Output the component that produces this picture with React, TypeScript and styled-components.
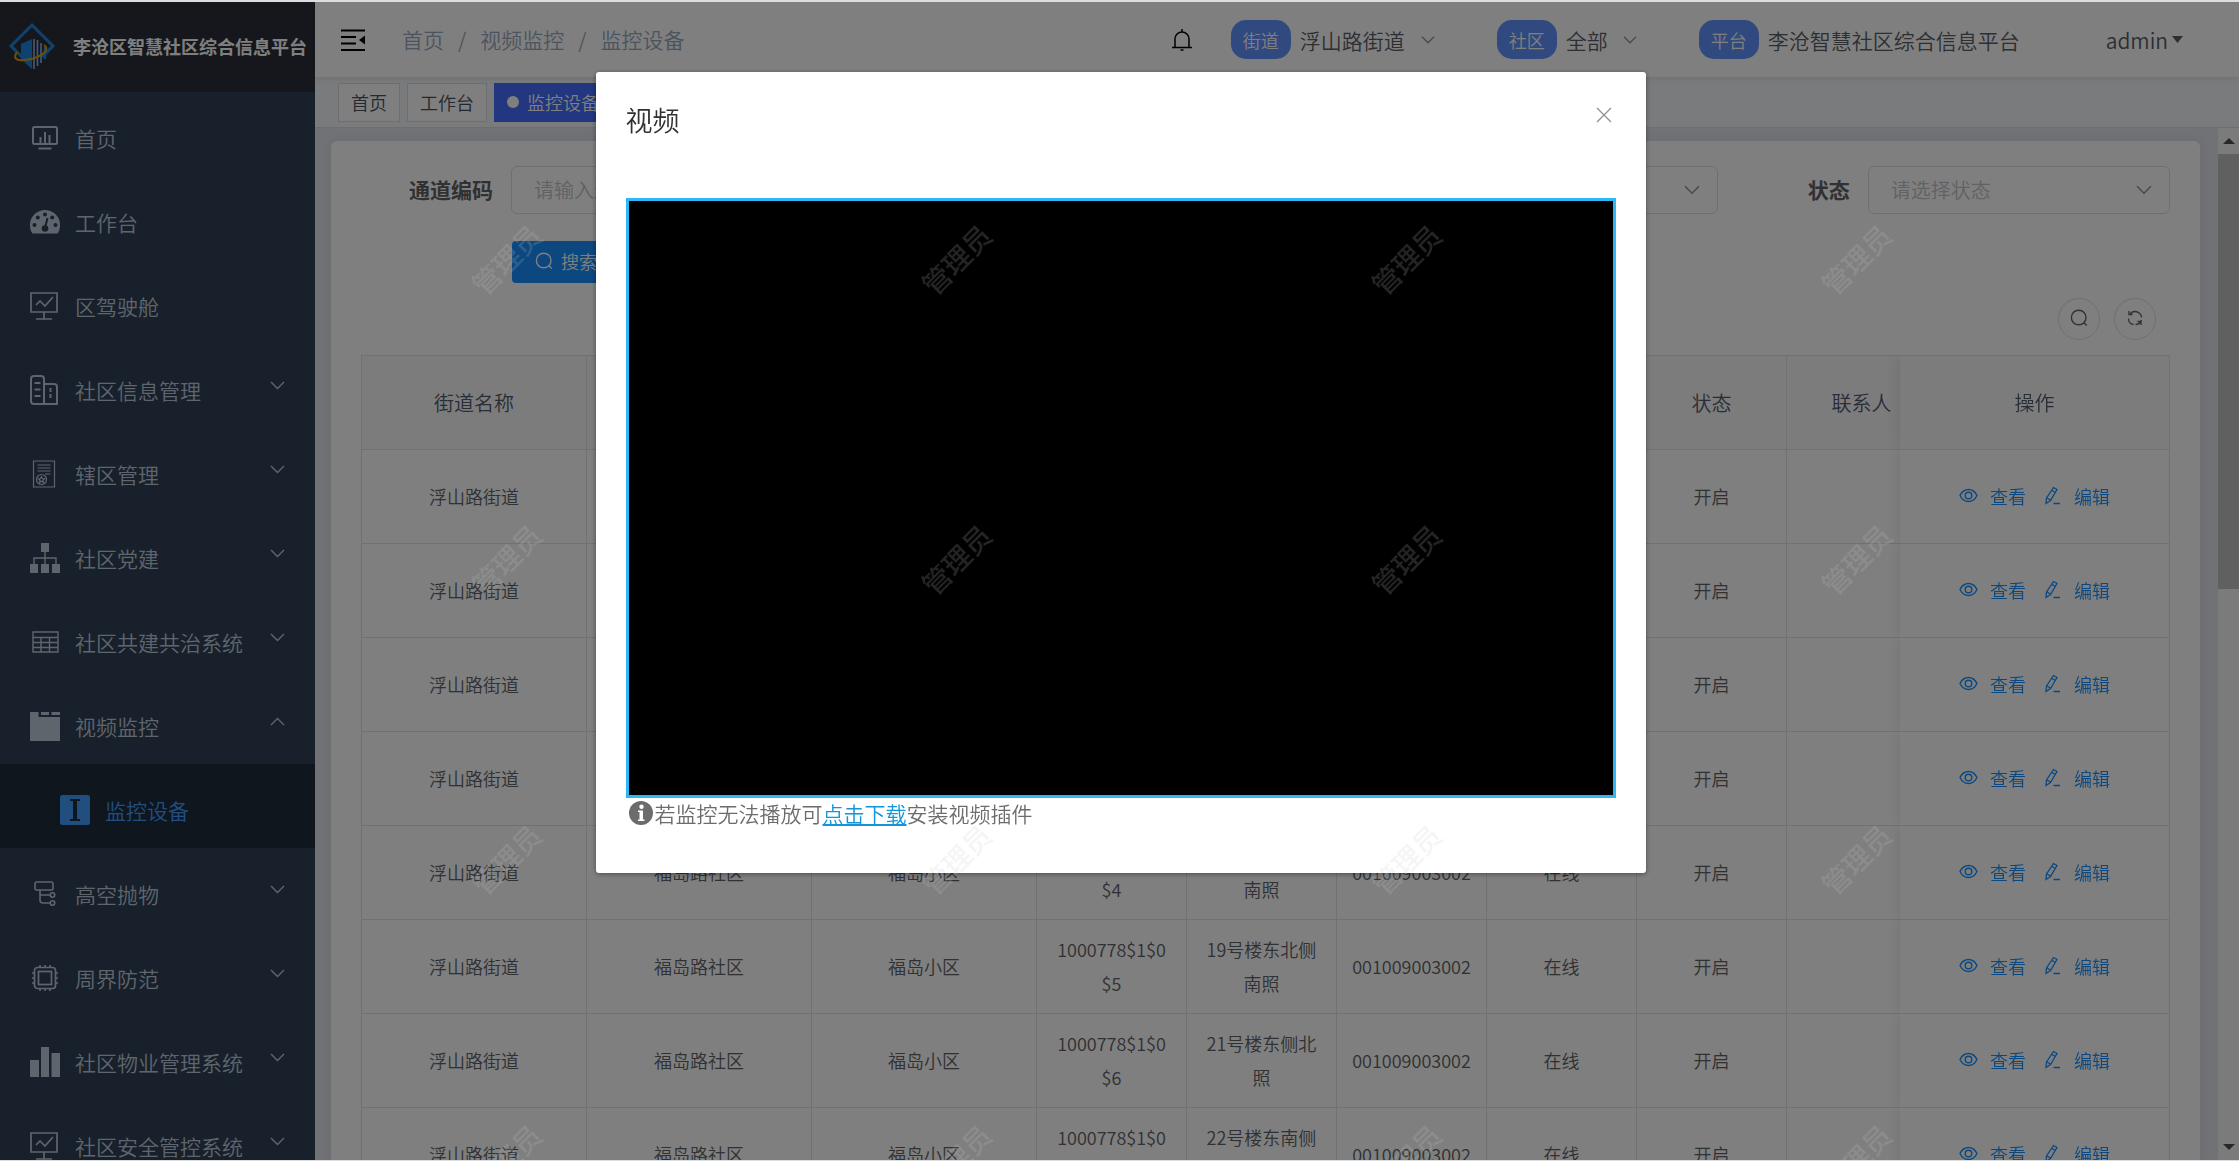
import React from 'react';
import styled, { createGlobalStyle, css } from 'styled-components';

const GlobalStyle = createGlobalStyle`
  *, *::before, *::after { box-sizing: border-box; }
  html, body { margin: 0; padding: 0; overflow: hidden; }
  body, button, input, select, table {
    font-family: "Noto Sans CJK SC", "Noto Sans", sans-serif;
    font-weight: 350;
  }
  ul { list-style: none; margin: 0; padding: 0; }
  a { text-decoration: none; }
  button { cursor: pointer; }
`;

/* ---------- shell ---------- */

const Page = styled.div`
  display: flex;
  flex-direction: column;
  height: 100vh;
  background: #dcddde;
  padding: 2px 0 1px;
`;

const Shell = styled.div`
  position: relative;
  display: flex;
  flex: 1;
  min-height: 0;
  overflow: hidden;
  background: #e1e4ec;
`;

const Sidebar = styled.aside`
  flex: 0 0 315px;
  overflow: hidden;
  background: #304156;
`;

const Brand = styled.a`
  display: flex;
  align-items: center;
  gap: 17px;
  height: 90px;
  padding-left: 8px;
  padding-bottom: 2px;
  background: #2b2f3a;
  color: #fff;
  font-size: 18px;
  font-weight: 700;
  white-space: nowrap;
`;

const MenuLink = styled.a<{ $sub?: boolean }>`
  display: flex;
  align-items: center;
  height: 84px;
  padding-left: ${(p) => (p.$sub ? 60 : 30)}px;
  padding-right: 30px;
  padding-bottom: 2px;
  color: ${(p) => (p.$sub ? '#409eff' : '#bfcbd9')};
  background: ${(p) => (p.$sub ? '#1f2d3d' : 'transparent')};
  font-size: 21px;
  white-space: nowrap;
`;

const MenuIcon = styled.span`
  display: flex;
  width: 30px;
  height: 30px;
  margin: 10px 15px 0 0;
`;

const MenuText = styled.span`
  flex: 1;
  padding-top: 9px;
`;

const Main = styled.main`
  display: flex;
  flex: 1;
  flex-direction: column;
  min-width: 0;
`;

/* ---------- top bar ---------- */

const TopBar = styled.header`
  position: relative;
  z-index: 1;
  display: flex;
  align-items: center;
  flex: 0 0 75px;
  padding: 0 56px 0 26px;
  background: #fff;
  box-shadow: 0 1px 6px rgba(0, 21, 41, 0.12);
  color: #5a5e66;
  font-size: 21px;
  white-space: nowrap;
`;

const PlainButton = styled.button`
  display: flex;
  padding: 0;
  border: 0;
  background: none;
  color: inherit;
`;

const Crumbs = styled.nav`
  display: flex;
  flex: 1;
  gap: 14px;
  margin-left: 37px;
  padding-bottom: 1px;
  color: #97a8be;
  a { color: inherit; }
`;

const Bell = styled(PlainButton)`
  margin-right: 38px;
  color: #000;
`;

const Picker = styled.div<{ $after: number }>`
  display: flex;
  align-items: center;
  gap: 9px;
  margin-right: ${(p) => p.$after}px;
`;

const Badge = styled.label`
  display: flex;
  align-items: center;
  justify-content: center;
  width: 60px;
  height: 39px;
  border-radius: 15px;
  background: #6092ff;
  color: #fff;
  font-size: 18px;
`;

const SelectWrap = styled.span`
  position: relative;
  display: flex;
`;

const SelectMark = styled.span<{ $right: number }>`
  position: absolute;
  top: 0;
  bottom: 0;
  right: ${(p) => p.$right}px;
  display: flex;
  align-items: center;
  color: #909399;
  pointer-events: none;
`;

const PlainSelect = styled.select<{ $width: number }>`
  width: ${(p) => p.$width}px;
  padding: 0;
  border: 0;
  appearance: none;
  background: transparent;
  color: #5a5e66;
  font-size: 21px;
`;

const UserMenu = styled(PlainButton)`
  align-items: center;
  gap: 4px;
  font-size: 21px;
`;

/* ---------- tabs ---------- */

const Tabs = styled.nav`
  display: flex;
  align-items: center;
  flex: 0 0 51px;
  gap: 7px;
  padding: 0 23px;
  background: #f4f6fa;
  border-bottom: 1px solid #d8dce5;
`;

const Tab = styled.a<{ $active?: boolean }>`
  display: flex;
  align-items: center;
  gap: 8px;
  height: 39px;
  padding: 0 12px;
  border: 1px solid #d8dce5;
  background: #fff;
  color: #495060;
  font-size: 18px;
  ${(p) =>
    p.$active &&
    css`
      border-color: #446eff;
      background: #446eff;
      color: #fff;
      &::before {
        content: '';
        width: 12px;
        height: 12px;
        border-radius: 50%;
        background: #fff;
      }
    `}
`;

/* ---------- content ---------- */

const Body = styled.div`
  display: flex;
  flex: 1;
  min-height: 0;
`;

const Scroller = styled.div`
  flex: 1;
  min-width: 0;
  overflow: hidden;
  padding: 13px 18px 0 16px;
`;

const Card = styled.section`
  padding: 25px 30px;
  border-radius: 6px;
  background: #fff;
  box-shadow: 0 0 12px rgba(0, 0, 0, 0.06);
`;

const ScrollBar = styled.div`
  display: flex;
  flex: 0 0 21px;
  flex-direction: column;
  background: #f6f6f6;
  color: #505050;
`;

const ScrollArrow = styled.span`
  display: flex;
  align-items: center;
  justify-content: center;
  flex: 0 0 26px;
`;

const ScrollTrack = styled.span`
  flex: 1;
  &::before {
    content: '';
    display: block;
    height: 44.4%;
    background: #c1c1c1;
  }
`;

const Filters = styled.form`
  display: grid;
  grid-template-columns: repeat(4, 1fr);
  row-gap: 27px;
`;

const Field = styled.div<{ $column: number }>`
  display: flex;
  align-items: center;
  grid-column: ${(p) => p.$column};
  grid-row: 1;
  label {
    flex: 0 0 150px;
    padding: 0 18px 2px 0;
    color: #606266;
    font-size: 21px;
    font-weight: 700;
    text-align: right;
  }
`;

const boxed = css`
  width: 100%;
  height: 48px;
  padding: 0 22px 2px;
  border: 1px solid #dcdfe6;
  border-radius: 6px;
  background: #fff;
  color: #c0c4cc;
  font-size: 20px;
`;

const TextInput = styled.input`
  ${boxed}
  &::placeholder { color: #c0c4cc; opacity: 1; }
`;

const BoxSelect = styled.select`
  ${boxed}
  appearance: none;
`;

const GrowWrap = styled(SelectWrap)<{ $inset?: boolean }>`
  flex: 1;
  margin-left: ${(p) => (p.$inset ? 150 : 0)}px;
`;

const FilterActions = styled.div`
  grid-column: 1;
  padding-left: 151px;
`;

const SearchButton = styled.button`
  display: flex;
  align-items: center;
  gap: 8px;
  height: 42px;
  padding: 0 23px 2px;
  border: 0;
  border-radius: 4px;
  background: #1890ff;
  color: #fff;
  font-size: 18px;
`;

const Tools = styled.div`
  display: flex;
  justify-content: flex-end;
  gap: 14px;
  margin: 15px 14px 15px 0;
`;

const RoundButton = styled.button`
  display: flex;
  align-items: center;
  justify-content: center;
  width: 42px;
  height: 42px;
  padding: 0 0 2px;
  border: 1px solid #dcdfe6;
  border-radius: 50%;
  background: #fff;
  color: #606266;
`;

const TableBox = styled.div`
  overflow: hidden;
  border: 1px solid #dfe3ea;
  border-width: 1px 0 0 1px;
`;

const DataTable = styled.table`
  width: 100%;
  min-width: 1845px;
  border-collapse: separate;
  border-spacing: 0;
  table-layout: fixed;
  color: #606266;
  font-size: 18px;
  th, td {
    height: 94px;
    padding: 0 15px 2px;
    border: 1px solid #dfe3ea;
    border-width: 0 1px 1px 0;
    background: #fff;
    line-height: 34px;
    text-align: center;
    word-break: break-all;
  }
  th {
    padding-bottom: 0;
    background: #f8f8f9;
    color: #515a6e;
    font-size: 20px;
    font-weight: 350;
  }
  th:last-child, td:last-child {
    position: sticky;
    right: 0;
    box-shadow: 0 0 15px rgba(0, 0, 0, 0.12);
    clip-path: inset(0 0 0 -15px);
  }
`;

const RowActions = styled.div`
  display: flex;
  justify-content: center;
  gap: 17px;
`;

const RowButton = styled(PlainButton)`
  align-items: center;
  gap: 12px;
  color: #1890ff;
  font-size: 18px;
`;

/* ---------- overlay ---------- */

const Mask = styled.div`
  position: absolute;
  inset: 0;
  z-index: 10;
  display: flex;
  align-items: flex-start;
  justify-content: center;
  padding: 70px 0 0 2px;
  background: rgba(0, 0, 0, 0.5);
`;

const Dialog = styled.section`
  width: 1050px;
  padding: 28px 30px 45px;
  border-radius: 3px;
  background: #fff;
  box-shadow: 0 1px 5px rgba(0, 0, 0, 0.4);
`;

const DialogHead = styled.header`
  display: flex;
  align-items: flex-start;
  justify-content: space-between;
  margin-bottom: 58px;
  h2 {
    margin: 0;
    color: #303133;
    font-size: 27px;
    font-weight: 350;
    line-height: 40px;
  }
`;

const CloseButton = styled(PlainButton)`
  padding: 7px 4px;
  color: #909399;
`;

const Player = styled.div`
  height: 600px;
  border: 3px solid #2db7f5;
  background: #000;
`;

const Hint = styled.p`
  display: flex;
  align-items: center;
  gap: 2px;
  margin: 0 0 0 3px;
  color: #6c6c6c;
  font-size: 21px;
  line-height: 30px;
  a {
    color: #1296db;
    text-decoration: underline;
  }
`;

const Watermarks = styled.div`
  position: absolute;
  inset: 107px 0 0 281px;
  z-index: 20;
  display: grid;
  grid-template-columns: repeat(auto-fill, 450px);
  grid-auto-rows: 300px;
  overflow: hidden;
  pointer-events: none;
  span {
    display: flex;
    align-items: center;
    justify-content: center;
    transform: rotate(-45deg);
    color: rgba(200, 200, 200, 0.18);
    font-size: 28px;
    font-weight: 500;
  }
`;

/* ---------- icons ---------- */

type IconProps = { size?: number; children: React.ReactNode; box?: number; stroke?: number };

const Svg = ({ size = 30, box = 30, stroke = 2, children }: IconProps) => (
  <svg width={size} height={size} viewBox={`0 0 ${box} ${box}`} fill="none" stroke="currentColor" strokeWidth={stroke} aria-hidden="true">
    {children}
  </svg>
);

const Chevron = ({ up, size = 15 }: { up?: boolean; size?: number }) => (
  <Svg size={size} box={15} stroke={1.4}>
    <path d={up ? 'M1 11l6.500-6.500L14 11' : 'M1 4l6.500 6.500L14 4'} />
  </Svg>
);

const Magnifier = ({ size = 18 }: { size?: number }) => (
  <Svg size={size} box={18} stroke={1.4}>
    <circle cx="8.700" cy="8.500" r="7.300" />
    <path d="M13.500 13.500l3.300 3" />
  </Svg>
);

const icons: Record<string, React.ReactNode> = {
  screen: (
    <>
      <rect x="3" y="4" width="24" height="17" rx="1.500" />
      <path d="M10.500 20v-6M15 20V9M19.500 20v-8M8.500 25.500h13" />
    </>
  ),
  gauge: (
    <>
      <path d="M15 3C7 3 0 9.500 0 17.500c0 4 .8 7 2.500 9h25c1.700-2 2.500-5 2.500-9C30 9.500 23 3 15 3z" fill="currentColor" stroke="none" />
      <g fill="#304156" stroke="none">
        <circle cx="15" cy="7.500" r="2" />
        <circle cx="7.800" cy="10.500" r="2" />
        <circle cx="22.200" cy="10.500" r="2" />
        <circle cx="4.500" cy="18" r="2" />
        <circle cx="25.500" cy="18" r="2" />
        <circle cx="15" cy="21.500" r="3.300" />
      </g>
      <path d="M15 21l2.500-10" stroke="#304156" />
    </>
  ),
  board: <path d="M1 2h26v19H1zM14 21v7M6 28h16M6 14l4-4 5 5 8-9" strokeWidth="1.700" />,
  building: (
    <>
      <path d="M1 26V4a3 3 0 0 1 3-3h7a3 3 0 0 1 3 3v25H4a3 3 0 0 1-3-3zM14 9h10a3 3 0 0 1 3 3v17H14" />
      <path d="M4.500 8h6M4.500 14.500h6M4.500 21h6M20.500 13v4M20.500 19v4" />
    </>
  ),
  certificate: (
    <g strokeWidth="1.200">
      <path d="M3.500 2h21v26h-21zM7.500 6h13M7.500 9h13M7.500 12h13M15 15h5.500" />
      <circle cx="11.500" cy="20.500" r="5" />
      <path d="M11.500 17.500l1 2 2 .3-1.500 1.500.4 2-1.900-1-1.900 1 .4-2-1.500-1.500 2-.3z" />
    </g>
  ),
  tree: (
    <>
      <path d="M15 9v12M4 21v-6h22v6" strokeWidth="1.400" />
      <path d="M11 0h8v9h-8zM0 21h8v9H0zM11 21h8v9h-8zM22 21h8v9h-8z" fill="currentColor" stroke="none" />
    </>
  ),
  grid: <path d="M3 5h25v20H3zM3 10.500h25M3 15.500h25M3 20.500h25M11 10.500V25M19.500 10.500V25" strokeWidth="1.400" />,
  tabs: (
    <>
      <path d="M0 1h8.500v5H30v25H0z" fill="currentColor" stroke="none" />
      <path d="M11 2.500h8M21.500 2.500H30" strokeWidth="3" />
    </>
  ),
  textbox: (
    <>
      <rect width="30" height="30" rx="2.500" fill="currentColor" stroke="none" />
      <path d="M10 5h10M10 25h10" stroke="#1f2d3d" strokeWidth="2" />
      <path d="M15 5v20" stroke="#1f2d3d" strokeWidth="4" />
    </>
  ),
  branch: (
    <g strokeWidth="1.600">
      <rect x="5" y="3" width="18" height="8" rx="1.500" />
      <path d="M10 11v10a3 3 0 0 0 3 3h7M10 16h10" />
      <circle cx="22.500" cy="16" r="2.200" />
      <circle cx="22.500" cy="24" r="2.200" />
    </g>
  ),
  chip: (
    <g strokeWidth="1.700">
      <rect x="4.500" y="4.500" width="21" height="21" rx="3" />
      <rect x="8.500" y="8.500" width="13" height="13" />
      <path d="M10 2v2M15 2v2M20 2v2M10 26v2M15 26v2M20 26v2M2 10h2M2 15h2M2 20h2M26 10h2M26 15h2M26 20h2" />
    </g>
  ),
  bars: <path d="M0 13h9v17H0zM11 0h8v30h-8zM21.500 6H30v24h-8.500z" fill="currentColor" stroke="none" />,
};

const Logo = () => (
  <svg width="48" height="48" viewBox="0 0 48 48" fill="none" aria-hidden="true">
    <path d="M14 35L3 24 24 3l21 21-11 11" stroke="#1c87e0" strokeWidth="3" />
    <path d="M13 22l11-5v30L13 37z" fill="#1c87e0" />
    <path d="M26 17v30M29.500 18v26M33 21v20" stroke="#8fb4f0" strokeWidth="1.600" />
    <path d="M37 25v12" stroke="#1c87e0" strokeWidth="2.500" />
    <path d="M9 30c-7 10 7 9 16 6.500C36 33 42 27 36 23" stroke="#e0a010" strokeWidth="2" />
  </svg>
);

/* ---------- data ---------- */

const menu = [
  { text: '首页', icon: 'screen' },
  { text: '工作台', icon: 'gauge' },
  { text: '区驾驶舱', icon: 'board' },
  { text: '社区信息管理', icon: 'building', fold: 'down' },
  { text: '辖区管理', icon: 'certificate', fold: 'down' },
  { text: '社区党建', icon: 'tree', fold: 'down' },
  { text: '社区共建共治系统', icon: 'grid', fold: 'down' },
  { text: '视频监控', icon: 'tabs', fold: 'up' },
  { text: '监控设备', icon: 'textbox', sub: true },
  { text: '高空抛物', icon: 'branch', fold: 'down' },
  { text: '周界防范', icon: 'chip', fold: 'down' },
  { text: '社区物业管理系统', icon: 'bars', fold: 'down' },
  { text: '社区安全管控系统', icon: 'board', fold: 'down' },
];

const columns = [
  { title: '街道名称', width: 225 },
  { title: '社区名称', width: 225 },
  { title: '小区名称', width: 225 },
  { title: '通道编码', width: 150 },
  { title: '通道名称', width: 150 },
  { title: '设备编码', width: 150 },
  { title: '在线状态', width: 150 },
  { title: '状态', width: 150 },
  { title: '联系人', width: 150 },
  { title: '操作', width: 270 },
];

const places = [
  '16号楼东北侧南照',
  '16号楼东侧北照',
  '17号楼东北侧南照',
  '17号楼东侧北照',
  '18号楼东北侧南照',
  '19号楼东北侧南照',
  '21号楼东侧北照',
  '22号楼东南侧北照',
];

const RowAction = ({ kind }: { kind: 'view' | 'edit' }) => (
  <RowButton type="button">
    {kind === 'view' ? (
      <Svg size={19} box={19} stroke={1.4}>
        <path d="M1 9.500C3 5.500 6 3.500 9.500 3.500s6.500 2 8.500 6c-2 4-5 6-8.500 6s-6.500-2-8.500-6z" />
        <circle cx="9.500" cy="9.500" r="3.300" />
      </Svg>
    ) : (
      <Svg size={19} box={19} stroke={1.3}>
        <path d="M10.500 1.500l3.500 2-6.500 11-4.500 3 .5-5.500zM9 4.500l3.500 2M4 12l3.500 2M10.500 17.500H17" />
      </Svg>
    )}
    {kind === 'view' ? '查看' : '编辑'}
  </RowButton>
);

export default function App() {
  return (
    <Page>
      <GlobalStyle />
      <Shell>
        <Sidebar>
          <Brand href="#">
            <Logo />
            李沧区智慧社区综合信息平台
          </Brand>
          <ul>
            {menu.map((m) => (
              <li key={m.text}>
                <MenuLink href="#" $sub={m.sub}>
                  <MenuIcon>
                    <Svg>{icons[m.icon]}</Svg>
                  </MenuIcon>
                  <MenuText>{m.text}</MenuText>
                  {m.fold && <Chevron up={m.fold === 'up'} />}
                </MenuLink>
              </li>
            ))}
          </ul>
        </Sidebar>

        <Main>
          <TopBar>
            <PlainButton type="button" aria-label="折叠菜单">
              <svg width="24" height="24" viewBox="0 0 24 24" fill="none" stroke="#000" strokeWidth="2.200" aria-hidden="true">
                <path d="M0 2.500h24M0 9h15M0 15.500h15M0 22h24" />
                <path d="M24 7.500v9L18 12z" fill="#000" stroke="none" />
              </svg>
            </PlainButton>
            <Crumbs>
              <a href="#">首页</a>
              <span>/</span>
              <a href="#">视频监控</a>
              <span>/</span>
              <span>监控设备</span>
            </Crumbs>
            <Bell type="button" aria-label="消息">
              <Svg size={22} box={22} stroke={1.5}>
                <path d="M1 18.500h20M4 18.500V10a7 7 0 0 1 14 0v8.500M11 0v3M9.500 21h3" />
              </Svg>
            </Bell>
            <Picker $after={62}>
              <Badge htmlFor="street">街道</Badge>
              <SelectWrap>
                <PlainSelect id="street" $width={135}>
                  <option>浮山路街道</option>
                </PlainSelect>
                <SelectMark $right={0}>
                  <Chevron size={14} />
                </SelectMark>
              </SelectWrap>
            </Picker>
            <Picker $after={62}>
              <Badge htmlFor="community">社区</Badge>
              <SelectWrap>
                <PlainSelect id="community" $width={71}>
                  <option>全部</option>
                </PlainSelect>
                <SelectMark $right={0}>
                  <Chevron size={14} />
                </SelectMark>
              </SelectWrap>
            </Picker>
            <Picker $after={86}>
              <Badge as="span">平台</Badge>
              <span>李沧智慧社区综合信息平台</span>
            </Picker>
            <UserMenu type="button">
              admin
              <svg width="11" height="7" viewBox="0 0 11 7" aria-hidden="true">
                <path d="M0 0h11L5.500 7z" fill="currentColor" />
              </svg>
            </UserMenu>
          </TopBar>

          <Tabs>
            <Tab href="#">首页</Tab>
            <Tab href="#">工作台</Tab>
            <Tab href="#" $active>
              监控设备
            </Tab>
          </Tabs>

          <Body>
            <Scroller>
              <Card>
                <Filters>
                  <Field $column={1}>
                    <label htmlFor="code">通道编码</label>
                    <TextInput id="code" placeholder="请输入通道编码" />
                  </Field>
                  <Field $column={3}>
                    <GrowWrap $inset>
                      <BoxSelect aria-label="在线状态" />
                      <SelectMark $right={18}>
                        <Chevron size={16} />
                      </SelectMark>
                    </GrowWrap>
                  </Field>
                  <Field $column={4}>
                    <label htmlFor="state">状态</label>
                    <GrowWrap>
                      <BoxSelect id="state">
                        <option>请选择状态</option>
                      </BoxSelect>
                      <SelectMark $right={18}>
                        <Chevron size={16} />
                      </SelectMark>
                    </GrowWrap>
                  </Field>
                  <FilterActions>
                    <SearchButton type="button">
                      <Magnifier />
                      搜索
                    </SearchButton>
                  </FilterActions>
                </Filters>

                <Tools>
                  <RoundButton type="button" aria-label="搜索">
                    <Magnifier />
                  </RoundButton>
                  <RoundButton type="button" aria-label="刷新">
                    <Svg size={18} box={18} stroke={1.3}>
                      <path d="M2.500 9.500c0 3 2 5.500 5 6M15.500 8.500c0-3.500-3-6-6.500-6-2 0-3.500.8-4.800 2.200M3 2v3.500h3.500M15.500 11c-.8 2.500-3 4.500-6 4.500M11.500 12.500H15V16" />
                    </Svg>
                  </RoundButton>
                </Tools>

                <TableBox>
                  <DataTable>
                    <colgroup>
                      {columns.map((c) => (
                        <col key={c.title} width={c.width} />
                      ))}
                    </colgroup>
                    <thead>
                      <tr>
                        {columns.map((c) => (
                          <th key={c.title}>{c.title}</th>
                        ))}
                      </tr>
                    </thead>
                    <tbody>
                      {places.map((place, i) => (
                        <tr key={place}>
                          <td>浮山路街道</td>
                          <td>福岛路社区</td>
                          <td>福岛小区</td>
                          <td>{`1000778$1$0$${i}`}</td>
                          <td>{place}</td>
                          <td>001009003002</td>
                          <td>在线</td>
                          <td>开启</td>
                          <td />
                          <td>
                            <RowActions>
                              <RowAction kind="view" />
                              <RowAction kind="edit" />
                            </RowActions>
                          </td>
                        </tr>
                      ))}
                    </tbody>
                  </DataTable>
                </TableBox>
              </Card>
            </Scroller>
            <ScrollBar aria-hidden="true">
              <ScrollArrow>
                <svg width="12" height="6" viewBox="0 0 12 6">
                  <path d="M0 6h12L6 0z" fill="currentColor" />
                </svg>
              </ScrollArrow>
              <ScrollTrack />
              <ScrollArrow>
                <svg width="12" height="6" viewBox="0 0 12 6">
                  <path d="M0 0h12L6 6z" fill="currentColor" />
                </svg>
              </ScrollArrow>
            </ScrollBar>
          </Body>
        </Main>

        <Mask>
          <Dialog role="dialog" aria-labelledby="dialog-title">
            <DialogHead>
              <h2 id="dialog-title">视频</h2>
              <CloseButton type="button" aria-label="关闭">
                <Svg size={16} box={16} stroke={1.4}>
                  <path d="M1 1l14 14M15 1L1 15" />
                </Svg>
              </CloseButton>
            </DialogHead>
            <Player />
            <Hint>
              <svg width="24" height="24" viewBox="0 0 24 24" aria-hidden="true">
                <circle cx="12" cy="12" r="12" fill="#6c6c6c" />
                <circle cx="12.500" cy="5.800" r="2.200" fill="#fff" />
                <path d="M9 9.500h5v9h1.500V20H9v-1.500h1.500V11H9z" fill="#fff" />
              </svg>
              <span>
                若监控无法播放可<a href="#">点击下载</a>安装视频插件
              </span>
            </Hint>
          </Dialog>
        </Mask>

        <Watermarks aria-hidden="true">
          {Array.from({ length: 16 }, (_, i) => (
            <span key={i}>管理员</span>
          ))}
        </Watermarks>
      </Shell>
    </Page>
  );
}
